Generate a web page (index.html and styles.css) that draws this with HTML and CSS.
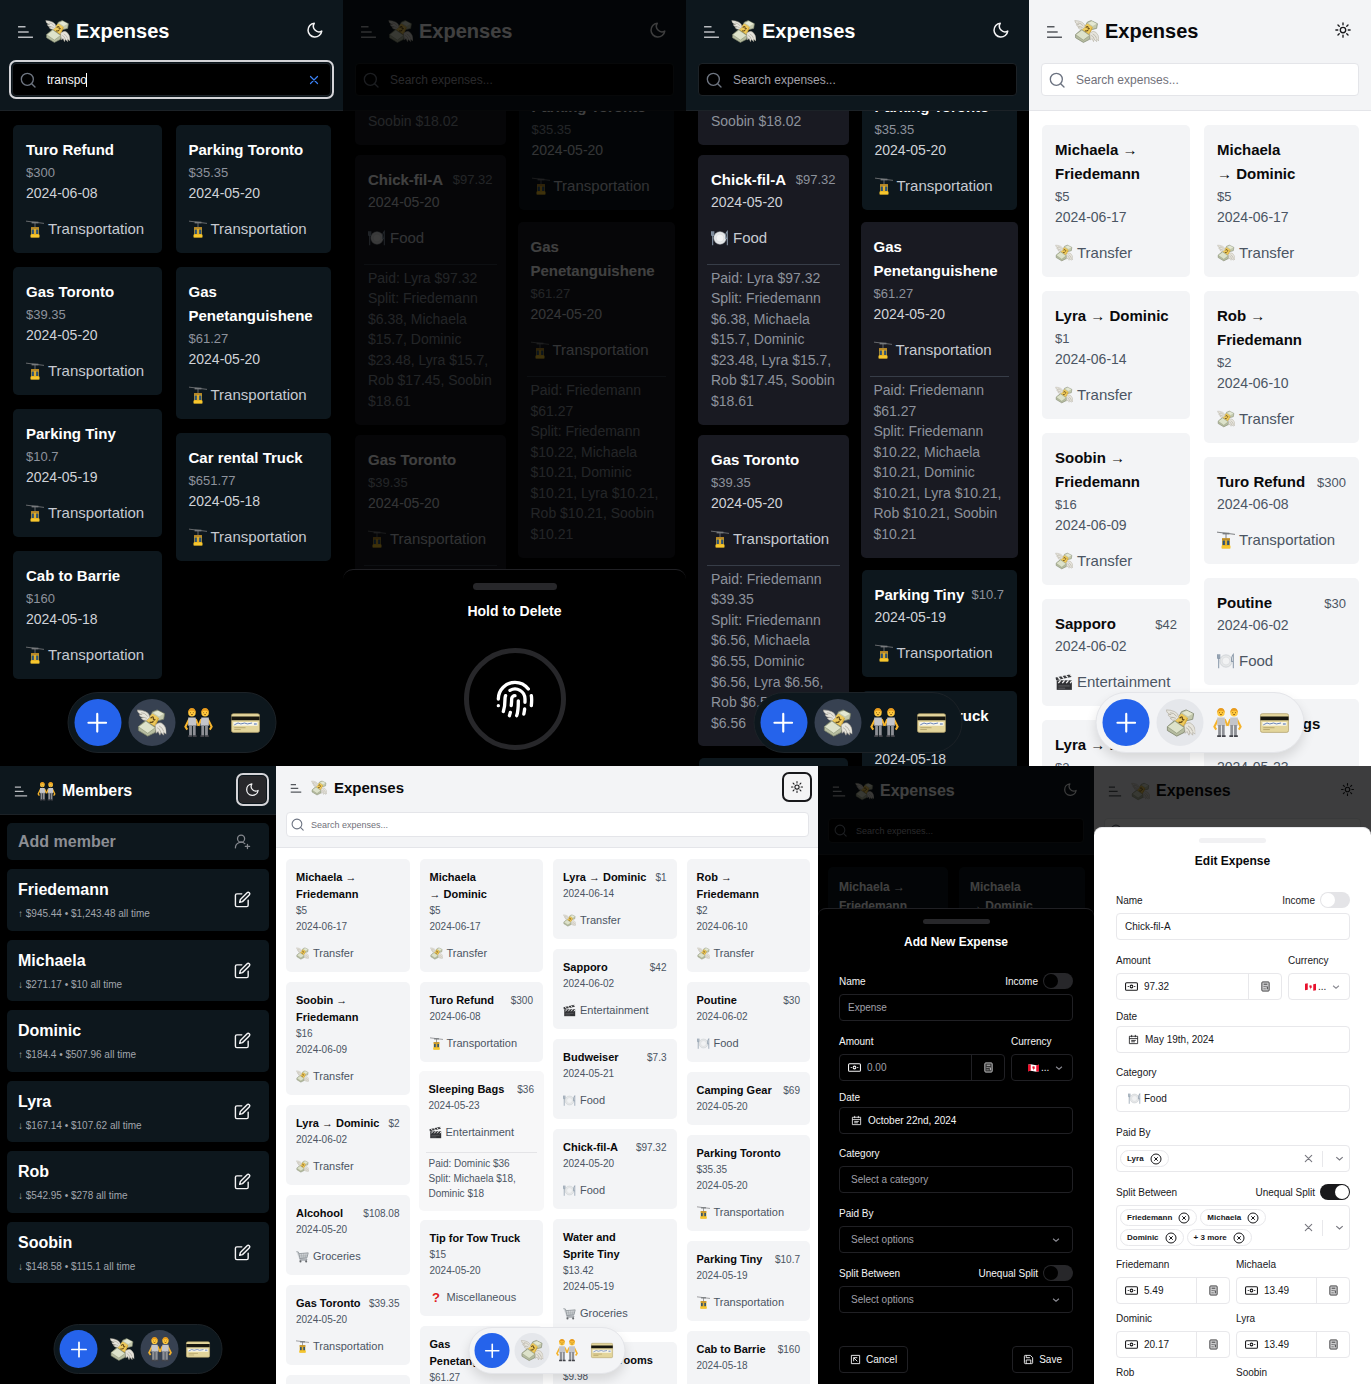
FILE: index.html
```html
<!DOCTYPE html>
<html lang="en">
<head>
<meta charset="utf-8">
<meta name="viewport" content="width=device-width, initial-scale=1">
<title>Expenses</title>
<link rel="stylesheet" href="styles.css">
</head>
<body>
<svg class="sprite" aria-hidden="true">
  <symbol id="menu" viewBox="0 0 16 16"><path d="M1 3.500h7M1 8.500h10M1 13.500h14" fill="none" stroke="currentColor" stroke-width="1.400"/></symbol>
  <symbol id="moon" viewBox="0 0 24 24"><path d="M11 3a7.500 7.500 0 0 0 10 10.500A9.200 9.200 0 1 1 11 3Z" fill="none" stroke="currentColor" stroke-width="2" stroke-linejoin="round"/></symbol>
  <symbol id="sun" viewBox="0 0 24 24"><g fill="none" stroke="currentColor" stroke-width="1.800" stroke-linecap="round"><circle cx="12" cy="12" r="3.600"/><path d="M12 2.500v2.500M12 19v2.500M2.500 12H5M19 12h2.500M5.300 5.300 7 7M17 17l1.700 1.700M5.300 18.700 7 17M17 7l1.700-1.700"/></g></symbol>
  <symbol id="search" viewBox="0 0 24 24"><g fill="none" stroke="currentColor" stroke-width="2" stroke-linecap="round"><circle cx="11" cy="11" r="9"/><path d="m17.500 17.500 5 5"/></g></symbol>
  <symbol id="plus" viewBox="0 0 24 24"><path d="M12 3v18M3 12h18" stroke="currentColor" stroke-width="2.200" stroke-linecap="round"/></symbol>
  <symbol id="x" viewBox="0 0 24 24"><path d="m5 5 14 14M19 5 5 19" stroke="currentColor" stroke-width="2.400" stroke-linecap="round"/></symbol>
  <symbol id="chevron" viewBox="0 0 24 24"><path d="m5 9 7 6 7-6" fill="none" stroke="currentColor" stroke-width="2.600"/></symbol>
  <symbol id="x-circle" viewBox="0 0 24 24"><g fill="none" stroke="currentColor" stroke-width="2"><circle cx="12" cy="12" r="10"/><path d="m8.500 8.500 7 7M15.500 8.500l-7 7"/></g></symbol>
  <symbol id="edit" viewBox="0 0 24 24"><g fill="none" stroke="currentColor" stroke-width="2" stroke-linecap="round" stroke-linejoin="round"><path d="M11 4H4a2 2 0 0 0-2 2v14a2 2 0 0 0 2 2h14a2 2 0 0 0 2-2v-7"/><path d="M18.500 2.500a2.121 2.121 0 0 1 3 3L12 15l-4 1 1-4 9.500-9.500z"/></g></symbol>
  <symbol id="user-plus" viewBox="0 0 24 24"><g fill="none" stroke="currentColor" stroke-width="1.800" stroke-linecap="round"><path d="M2 21a8 8 0 0 1 13.292-6"/><circle cx="10" cy="8" r="5"/><path d="M19 16v6M22 19h-6"/></g></symbol>
  <symbol id="fingerprint" viewBox="0 0 24 24"><path fill="none" stroke="currentColor" stroke-width="2" stroke-linecap="round" d="M2 12C2 6.500 6.500 2 12 2a10 10 0 0 1 8 4M5 19.500C5.500 18 6 15 6 12c0-.7.12-1.370.34-2M17.290 21.020c.12-.6.43-2.300.5-3.020M12 10a2 2 0 0 0-2 2c0 1.020-.1 2.510-.26 4M8.650 22c.21-.66.45-1.320.57-2M14 13.120c0 2.380 0 6.380-1 8.880M2 16h.01M21.800 16c.2-2 .131-5.354 0-6M9 6.800a6 6 0 0 1 9 5.200c0 .47 0 1.170-.02 2"/></symbol>
  <symbol id="note" viewBox="0 0 24 24"><g fill="none" stroke="currentColor" stroke-width="2"><rect x="1" y="5" width="22" height="14" rx="2"/><circle cx="12" cy="12" r="2.500"/><path d="M5 12h2M17 12h2"/></g></symbol>
  <symbol id="calc" viewBox="0 0 24 24"><rect x="4" y="2" width="16" height="20" rx="2" fill="currentColor" fill-opacity=".25" stroke="currentColor" stroke-width="2"/><path d="M8 7h8M8 12h2M12 12h2M8 17h2M12 17h1M16 12v6" stroke="currentColor" stroke-width="2"/></symbol>
  <symbol id="calendar" viewBox="0 0 24 24"><path d="M3 5h18v16H3zM3 10h18M8 2v5M16 2v5M7 14h10M7 17h8" fill="none" stroke="currentColor" stroke-width="1.800"/></symbol>
  <symbol id="leave" viewBox="0 0 24 24"><path d="M3 3h18v18H3zM8 16V8h8M8 8l8 8" fill="none" stroke="currentColor" stroke-width="2"/></symbol>
  <symbol id="save" viewBox="0 0 24 24"><path d="M3 5q0-2 2-2h11l5 5v11q0 2-2 2H5q-2 0-2-2zM7 3v5h8M7 21v-8h10v8" fill="none" stroke="currentColor" stroke-width="2"/></symbol>

  <symbol id="money" viewBox="0 0 32 32">
    <path d="m17 4 5-2 8 4-1 6-8 2-7-4z" fill="#c4c9ad" stroke="#777e66" stroke-width=".8"/><path d="m18 5 5-2 6 3-5 3z" fill="#e4e8d2"/>
    <path d="m2 20 8-7 11 8-1 5-8 4-10-6z" fill="#b6bca0" stroke="#777e66" stroke-width=".8"/><path d="m2 20 8-6 10 7-8 6z" fill="#dde2ca" stroke="#848c70" stroke-width=".6"/>
    <path d="m10 13 7-7 7 5-4 9z" fill="#d6a936"/><path d="m10 13 7-7 6 4-4 9z" fill="#edc95b"/><path d="M15 11q3-3 3 0t2 1M14 15q3 1 4-1" fill="none" stroke="#654b18" stroke-width="1.400"/>
    <path d="M1 2q5 0 9 2 4 2 4 6l-3 3Q7 14 5 11l3-1Q3 10 3 7h3Q1 6 1 2z" fill="#e6e4dc" stroke="#a8a294" stroke-width=".6"/>
    <path d="M20 18q5-4 8-1 4 3 4 11l-3-2v3l-3-3-1 3-2-4-2 2z" fill="#e6e4dc" stroke="#a8a294" stroke-width=".6"/>
    <path d="M5 5q4 0 7 4M8 10l3 1M24 19q4 2 5 6M22 21q3 1 4 5" fill="none" stroke="#aaa599" stroke-width=".8"/>
  </symbol>
  <symbol id="pair" viewBox="0 0 32 32">
    <g id="pair-one"><path d="m6 12-4 8 2 3M13 12l3 7" fill="none" stroke="#f5b32c" stroke-width="2.200"/><path d="M5 10h8l1 9H5z" fill="#c4c5ca"/><path d="M6 18h3v12H6zM10 18h3v12h-3z" fill="#8e9096"/><path d="M5 29h4v2H5zM10 29h4v2h-4z" fill="#424349"/><circle cx="9" cy="5" r="4" fill="#ffc93e"/><path d="M5 5Q5 0 9 0t4 5l-2-2H7z" fill="#e89a1c"/><path d="M7 5h1M10 5h1M8 7h2" stroke="#70430d" stroke-width=".8"/></g>
    <use href="#pair-one" transform="translate(32 0) scale(-1 1)"/>
  </symbol>
  <symbol id="card" viewBox="0 0 32 32"><rect x="1" y="6" width="30" height="20" rx="2" fill="#e3d59b" stroke="#a99863" stroke-width=".7"/><path d="M1 9h30v4H1z" fill="#17160f"/><path d="M3 15h26v4H3z" fill="#f8f6ea"/><path d="m4 18 4-2 3 1 4-1 3 1 5-1" fill="none" stroke="#617eb7"/><path d="M25 16h3v2h-3z" fill="#9badcd"/><path d="M4 21h12M4 23h7" stroke="#b6a56c"/></symbol>
  <symbol id="tram" viewBox="0 0 32 32"><path d="m0 2 32 4M16 5v9" fill="none" stroke="#6f7275" stroke-width="1.600"/><path d="M10 3h12v3H10z" fill="#777a7d"/><path d="M9 13h14v18H9z" fill="#e7af1f"/><path d="M9 13h14v3H9z" fill="#b9892a"/><path d="M10 17h4v8h-4zM18 17h4v8h-4z" fill="#2c5276"/><path d="M15 16h2v10h-2z" fill="#d8aa32"/><path d="M8 26h16v5H8z" fill="#f6c72e"/></symbol>
  <symbol id="plate" viewBox="0 0 32 32"><circle cx="16" cy="16" r="11" fill="#e5e7e8" stroke="#bfc4c9"/><circle cx="16" cy="16" r="7" fill="#f1f2f3" stroke="#d2d5d8"/><path d="M1 4v6q0 2 2 2t2-2V4M3 4v25M29 29V4q-4 4-3 13h3" fill="none" stroke="#8998a9" stroke-width="1.800"/></symbol>
  <symbol id="clap" viewBox="0 0 32 32"><path d="M3 13h27v17H3z" fill="#313235"/><path d="m1 8 27-6 1 5-27 6z" fill="#393a3d"/><path d="m5 7 4 4M12 5l4 5M19 4l4 4M26 2l3 3M6 18l4-5M13 18l4-5M20 18l4-5M27 18l3-4" stroke="#f0f0f0" stroke-width="2.400"/><path d="M6 23h20M6 27h12" stroke="#85868a"/></symbol>
  <symbol id="cart" viewBox="0 0 32 32"><path d="m1 4 5 1 4 17h17l-1 3H9M7 9l23-2-3 12-18 2" fill="#d7dadd" stroke="#8c9298" stroke-width="2"/><path d="M8 13h21M9 17h19M13 9l2 12M19 8v12M25 8l-2 11" stroke="#8c9298"/><circle cx="11" cy="28" r="2.500" fill="#63666a"/><circle cx="25" cy="28" r="2.500" fill="#63666a"/></symbol>
  <symbol id="flag" viewBox="0 0 24 16"><path d="M0 1q6-2 12 0t12 0v14q-6 2-12 0t-12 0z" fill="#fff"/><path d="M0 1q3-1 6-1v14q-3 0-6 1zM18 2q3 0 6-1v14q-3 1-6 1z" fill="#e8112d"/><path d="m12 3 1 2 2-1-1 3 2 1-3 2v3h-1v-3L9 8l1-1-1-3 2 1z" fill="#e8112d"/></symbol>
</svg>

<main class="board">
<div class="row row-top">

  <section class="screen phone dark">
    <header class="top">
      <div class="brand"><button class="menu" aria-label="Menu"><svg><use href="#menu"/></svg></button><svg class="logo"><use href="#money"/></svg><h2>Expenses</h2><button class="mode" aria-label="Theme"><svg><use href="#moon"/></svg></button></div>
      <div class="search focused"><svg><use href="#search"/></svg><input type="text" aria-label="Search expenses" value="transpo"><span class="caret"></span><button class="clear" aria-label="Clear"><svg><use href="#x"/></svg></button></div>
    </header>
    <div class="feed">
      <div class="col">
        <article class="card"><div class="head"><h3>Turo Refund</h3><span>$300</span></div><time>2024-06-08</time><p class="cat"><svg><use href="#tram"/></svg>Transportation</p></article>
        <article class="card"><div class="head"><h3>Gas Toronto</h3><span>$39.35</span></div><time>2024-05-20</time><p class="cat"><svg><use href="#tram"/></svg>Transportation</p></article>
        <article class="card"><div class="head"><h3>Parking Tiny</h3><span>$10.7</span></div><time>2024-05-19</time><p class="cat"><svg><use href="#tram"/></svg>Transportation</p></article>
        <article class="card"><div class="head"><h3>Cab to Barrie</h3><span>$160</span></div><time>2024-05-18</time><p class="cat"><svg><use href="#tram"/></svg>Transportation</p></article>
      </div>
      <div class="col">
        <article class="card"><div class="head"><h3>Parking Toronto</h3><span>$35.35</span></div><time>2024-05-20</time><p class="cat"><svg><use href="#tram"/></svg>Transportation</p></article>
        <article class="card"><div class="head"><h3>Gas<br>Penetanguishene</h3><span>$61.27</span></div><time>2024-05-20</time><p class="cat"><svg><use href="#tram"/></svg>Transportation</p></article>
        <article class="card"><div class="head"><h3>Car rental Truck</h3><span>$651.77</span></div><time>2024-05-18</time><p class="cat"><svg><use href="#tram"/></svg>Transportation</p></article>
      </div>
    </div>
    <nav class="dock"><button class="add" aria-label="Add"><svg><use href="#plus"/></svg></button><a href="#" class="on" aria-label="Expenses"><svg><use href="#money"/></svg></a><a href="#" aria-label="Members"><svg><use href="#pair"/></svg></a><a href="#" aria-label="Balances"><svg><use href="#card"/></svg></a></nav>
  </section>

  <section class="screen phone dark">
    <header class="top">
      <div class="brand"><button class="menu" aria-label="Menu"><svg><use href="#menu"/></svg></button><svg class="logo"><use href="#money"/></svg><h2>Expenses</h2><button class="mode" aria-label="Theme"><svg><use href="#moon"/></svg></button></div>
      <div class="search"><svg><use href="#search"/></svg><input type="text" aria-label="Search expenses" placeholder="Search expenses..."></div>
    </header>
    <div class="feed scrolled">
      <div class="col">
        <article class="card open"><p class="rest">Soobin $18.02</p></article>
        <article class="card open"><div class="head inline"><h3>Chick-fil-A</h3><span>$97.32</span></div><time>2024-05-20</time><p class="cat"><svg><use href="#plate"/></svg>Food</p><p class="split">Paid: Lyra $97.32<br>Split: Friedemann<br>$6.38, Michaela<br>$15.7, Dominic<br>$23.48, Lyra $15.7,<br>Rob $17.45, Soobin<br>$18.61</p></article>
        <article class="card open"><div class="head"><h3>Gas Toronto</h3><span>$39.35</span></div><time>2024-05-20</time><p class="cat"><svg><use href="#tram"/></svg>Transportation</p><p class="split">Paid: Friedemann<br>$39.35<br>Split: Friedemann</p></article>
      </div>
      <div class="col">
        <article class="card"><div class="head"><h3>Parking Toronto</h3><span>$35.35</span></div><time>2024-05-20</time><p class="cat"><svg><use href="#tram"/></svg>Transportation</p></article>
        <article class="card open"><div class="head"><h3>Gas<br>Penetanguishene</h3><span>$61.27</span></div><time>2024-05-20</time><p class="cat"><svg><use href="#tram"/></svg>Transportation</p><p class="split">Paid: Friedemann<br>$61.27<br>Split: Friedemann<br>$10.22, Michaela<br>$10.21, Dominic<br>$10.21, Lyra $10.21,<br>Rob $10.21, Soobin<br>$10.21</p></article>
      </div>
    </div>
    <div class="shade"></div>
    <div class="sheet confirm" role="dialog" aria-label="Hold to Delete">
      <div class="grip"></div><h2>Hold to Delete</h2>
      <button class="hold" aria-label="Hold to delete"><svg><use href="#fingerprint"/></svg></button>
    </div>
  </section>

  <section class="screen phone dark">
    <header class="top">
      <div class="brand"><button class="menu" aria-label="Menu"><svg><use href="#menu"/></svg></button><svg class="logo"><use href="#money"/></svg><h2>Expenses</h2><button class="mode" aria-label="Theme"><svg><use href="#moon"/></svg></button></div>
      <div class="search"><svg><use href="#search"/></svg><input type="text" aria-label="Search expenses" placeholder="Search expenses..."></div>
    </header>
    <div class="feed scrolled">
      <div class="col">
        <article class="card open"><p class="rest">Soobin $18.02</p></article>
        <article class="card open"><div class="head inline"><h3>Chick-fil-A</h3><span>$97.32</span></div><time>2024-05-20</time><p class="cat"><svg><use href="#plate"/></svg>Food</p><p class="split">Paid: Lyra $97.32<br>Split: Friedemann<br>$6.38, Michaela<br>$15.7, Dominic<br>$23.48, Lyra $15.7,<br>Rob $17.45, Soobin<br>$18.61</p></article>
        <article class="card open"><div class="head"><h3>Gas Toronto</h3><span>$39.35</span></div><time>2024-05-20</time><p class="cat"><svg><use href="#tram"/></svg>Transportation</p><p class="split">Paid: Friedemann<br>$39.35<br>Split: Friedemann<br>$6.56, Michaela<br>$6.55, Dominic<br>$6.56, Lyra $6.56,<br>Rob $6.56, Soobin<br>$6.56</p></article>
        <article class="card"><div class="head"></div></article>
      </div>
      <div class="col">
        <article class="card"><div class="head"><h3>Parking Toronto</h3><span>$35.35</span></div><time>2024-05-20</time><p class="cat"><svg><use href="#tram"/></svg>Transportation</p></article>
        <article class="card open"><div class="head"><h3>Gas<br>Penetanguishene</h3><span>$61.27</span></div><time>2024-05-20</time><p class="cat"><svg><use href="#tram"/></svg>Transportation</p><p class="split">Paid: Friedemann<br>$61.27<br>Split: Friedemann<br>$10.22, Michaela<br>$10.21, Dominic<br>$10.21, Lyra $10.21,<br>Rob $10.21, Soobin<br>$10.21</p></article>
        <article class="card"><div class="head inline"><h3>Parking Tiny</h3><span>$10.7</span></div><time>2024-05-19</time><p class="cat"><svg><use href="#tram"/></svg>Transportation</p></article>
        <article class="card"><div class="head"><h3>Car rental Truck</h3><span>$651.77</span></div><time>2024-05-18</time></article>
      </div>
    </div>
    <nav class="dock"><button class="add" aria-label="Add"><svg><use href="#plus"/></svg></button><a href="#" class="on" aria-label="Expenses"><svg><use href="#money"/></svg></a><a href="#" aria-label="Members"><svg><use href="#pair"/></svg></a><a href="#" aria-label="Balances"><svg><use href="#card"/></svg></a></nav>
  </section>

  <section class="screen phone light">
    <header class="top">
      <div class="brand"><button class="menu" aria-label="Menu"><svg><use href="#menu"/></svg></button><svg class="logo"><use href="#money"/></svg><h2>Expenses</h2><button class="mode" aria-label="Theme"><svg><use href="#sun"/></svg></button></div>
      <div class="search"><svg><use href="#search"/></svg><input type="text" aria-label="Search expenses" placeholder="Search expenses..."></div>
    </header>
    <div class="feed">
      <div class="col">
        <article class="card"><div class="head"><h3>Michaela <i>→</i><br>Friedemann</h3><span>$5</span></div><time>2024-06-17</time><p class="cat"><svg><use href="#money"/></svg>Transfer</p></article>
        <article class="card"><div class="head"><h3>Lyra <i>→</i> Dominic</h3><span>$1</span></div><time>2024-06-14</time><p class="cat"><svg><use href="#money"/></svg>Transfer</p></article>
        <article class="card"><div class="head"><h3>Soobin <i>→</i><br>Friedemann</h3><span>$16</span></div><time>2024-06-09</time><p class="cat"><svg><use href="#money"/></svg>Transfer</p></article>
        <article class="card"><div class="head inline"><h3>Sapporo</h3><span>$42</span></div><time>2024-06-02</time><p class="cat"><svg><use href="#clap"/></svg>Entertainment</p></article>
        <article class="card"><div class="head"><h3>Lyra <i>→</i> Dominic</h3><span>$2</span></div></article>
      </div>
      <div class="col">
        <article class="card"><div class="head"><h3>Michaela<br><i>→</i> Dominic</h3><span>$5</span></div><time>2024-06-17</time><p class="cat"><svg><use href="#money"/></svg>Transfer</p></article>
        <article class="card"><div class="head"><h3>Rob <i>→</i><br>Friedemann</h3><span>$2</span></div><time>2024-06-10</time><p class="cat"><svg><use href="#money"/></svg>Transfer</p></article>
        <article class="card"><div class="head inline"><h3>Turo Refund</h3><span>$300</span></div><time>2024-06-08</time><p class="cat"><svg><use href="#tram"/></svg>Transportation</p></article>
        <article class="card"><div class="head inline"><h3>Poutine</h3><span>$30</span></div><time>2024-06-02</time><p class="cat"><svg><use href="#plate"/></svg>Food</p></article>
        <article class="card"><div class="head"><h3>Sleeping Bags</h3><span>$36</span></div><time>2024-05-23</time></article>
      </div>
    </div>
    <nav class="dock"><button class="add" aria-label="Add"><svg><use href="#plus"/></svg></button><a href="#" class="on" aria-label="Expenses"><svg><use href="#money"/></svg></a><a href="#" aria-label="Members"><svg><use href="#pair"/></svg></a><a href="#" aria-label="Balances"><svg><use href="#card"/></svg></a></nav>
  </section>
</div>

<div class="row row-bottom">
  <section class="screen small dark">
    <header class="top bare">
      <div class="brand"><button class="menu" aria-label="Menu"><svg><use href="#menu"/></svg></button><svg class="logo"><use href="#pair"/></svg><h2>Members</h2><button class="mode ring" aria-label="Theme"><svg><use href="#moon"/></svg></button></div>
    </header>
    <div class="members">
      <div class="add-member"><input type="text" aria-label="Add member" placeholder="Add member"><button aria-label="Add member"><svg><use href="#user-plus"/></svg></button></div>
      <article class="member"><div><h3>Friedemann</h3><p>↑ $945.44 • $1,243.48 all time</p></div><button aria-label="Edit Friedemann"><svg><use href="#edit"/></svg></button></article>
      <article class="member"><div><h3>Michaela</h3><p>↓ $271.17 • $10 all time</p></div><button aria-label="Edit Michaela"><svg><use href="#edit"/></svg></button></article>
      <article class="member"><div><h3>Dominic</h3><p>↑ $184.4 • $507.96 all time</p></div><button aria-label="Edit Dominic"><svg><use href="#edit"/></svg></button></article>
      <article class="member"><div><h3>Lyra</h3><p>↓ $167.14 • $107.62 all time</p></div><button aria-label="Edit Lyra"><svg><use href="#edit"/></svg></button></article>
      <article class="member"><div><h3>Rob</h3><p>↓ $542.95 • $278 all time</p></div><button aria-label="Edit Rob"><svg><use href="#edit"/></svg></button></article>
      <article class="member"><div><h3>Soobin</h3><p>↓ $148.58 • $115.1 all time</p></div><button aria-label="Edit Soobin"><svg><use href="#edit"/></svg></button></article>
    </div>
    <nav class="dock"><button class="add" aria-label="Add"><svg><use href="#plus"/></svg></button><a href="#" aria-label="Expenses"><svg><use href="#money"/></svg></a><a href="#" class="on" aria-label="Members"><svg><use href="#pair"/></svg></a><a href="#" aria-label="Balances"><svg><use href="#card"/></svg></a></nav>
  </section>

  <section class="screen wide light">
    <header class="top">
      <div class="brand"><button class="menu" aria-label="Menu"><svg><use href="#menu"/></svg></button><svg class="logo"><use href="#money"/></svg><h2>Expenses</h2><button class="mode ring" aria-label="Theme"><svg><use href="#sun"/></svg></button></div>
      <div class="search"><svg><use href="#search"/></svg><input type="text" aria-label="Search expenses" placeholder="Search expenses..."></div>
    </header>
    <div class="feed">
      <div class="col">
        <article class="card"><div class="head"><h3>Michaela <i>→</i><br>Friedemann</h3><span>$5</span></div><time>2024-06-17</time><p class="cat"><svg><use href="#money"/></svg>Transfer</p></article>
        <article class="card"><div class="head"><h3>Soobin <i>→</i><br>Friedemann</h3><span>$16</span></div><time>2024-06-09</time><p class="cat"><svg><use href="#money"/></svg>Transfer</p></article>
        <article class="card"><div class="head inline"><h3>Lyra <i>→</i> Dominic</h3><span>$2</span></div><time>2024-06-02</time><p class="cat"><svg><use href="#money"/></svg>Transfer</p></article>
        <article class="card"><div class="head inline"><h3>Alcohool</h3><span>$108.08</span></div><time>2024-05-20</time><p class="cat"><svg><use href="#cart"/></svg>Groceries</p></article>
        <article class="card"><div class="head inline"><h3>Gas Toronto</h3><span>$39.35</span></div><time>2024-05-20</time><p class="cat"><svg><use href="#tram"/></svg>Transportation</p></article>
        <article class="card"><div class="head"></div></article>
      </div>
      <div class="col">
        <article class="card"><div class="head"><h3>Michaela<br><i>→</i> Dominic</h3><span>$5</span></div><time>2024-06-17</time><p class="cat"><svg><use href="#money"/></svg>Transfer</p></article>
        <article class="card"><div class="head inline"><h3>Turo Refund</h3><span>$300</span></div><time>2024-06-08</time><p class="cat"><svg><use href="#tram"/></svg>Transportation</p></article>
        <article class="card open"><div class="head inline"><h3>Sleeping Bags</h3><span>$36</span></div><time>2024-05-23</time><p class="cat"><svg><use href="#clap"/></svg>Entertainment</p><p class="split">Paid: Dominic $36<br>Split: Michaela $18,<br>Dominic $18</p></article>
        <article class="card"><div class="head"><h3>Tip for Tow Truck</h3><span>$15</span></div><time>2024-05-20</time><p class="cat"><b>?</b>Miscellaneous</p></article>
        <article class="card"><div class="head"><h3>Gas<br>Penetanguishene</h3><span>$61.27</span></div></article>
      </div>
      <div class="col">
        <article class="card"><div class="head inline"><h3>Lyra <i>→</i> Dominic</h3><span>$1</span></div><time>2024-06-14</time><p class="cat"><svg><use href="#money"/></svg>Transfer</p></article>
        <article class="card"><div class="head inline"><h3>Sapporo</h3><span>$42</span></div><time>2024-06-02</time><p class="cat"><svg><use href="#clap"/></svg>Entertainment</p></article>
        <article class="card"><div class="head inline"><h3>Budweiser</h3><span>$7.3</span></div><time>2024-05-21</time><p class="cat"><svg><use href="#plate"/></svg>Food</p></article>
        <article class="card"><div class="head inline"><h3>Chick-fil-A</h3><span>$97.32</span></div><time>2024-05-20</time><p class="cat"><svg><use href="#plate"/></svg>Food</p></article>
        <article class="card"><div class="head"><h3>Water and<br>Sprite Tiny</h3><span>$13.42</span></div><time>2024-05-19</time><p class="cat"><svg><use href="#cart"/></svg>Groceries</p></article>
        <article class="card"><div class="head"><h3>King Mushrooms</h3><span>$9.98</span></div></article>
      </div>
      <div class="col">
        <article class="card"><div class="head"><h3>Rob <i>→</i><br>Friedemann</h3><span>$2</span></div><time>2024-06-10</time><p class="cat"><svg><use href="#money"/></svg>Transfer</p></article>
        <article class="card"><div class="head inline"><h3>Poutine</h3><span>$30</span></div><time>2024-06-02</time><p class="cat"><svg><use href="#plate"/></svg>Food</p></article>
        <article class="card"><div class="head inline"><h3>Camping Gear</h3><span>$69</span></div><time>2024-05-20</time></article>
        <article class="card"><div class="head"><h3>Parking Toronto</h3><span>$35.35</span></div><time>2024-05-20</time><p class="cat"><svg><use href="#tram"/></svg>Transportation</p></article>
        <article class="card"><div class="head inline"><h3>Parking Tiny</h3><span>$10.7</span></div><time>2024-05-19</time><p class="cat"><svg><use href="#tram"/></svg>Transportation</p></article>
        <article class="card"><div class="head inline"><h3>Cab to Barrie</h3><span>$160</span></div><time>2024-05-18</time><p class="cat"></p></article>
      </div>
    </div>
    <nav class="dock"><button class="add" aria-label="Add"><svg><use href="#plus"/></svg></button><a href="#" class="on" aria-label="Expenses"><svg><use href="#money"/></svg></a><a href="#" aria-label="Members"><svg><use href="#pair"/></svg></a><a href="#" aria-label="Balances"><svg><use href="#card"/></svg></a></nav>
  </section>

  <section class="screen small dark">
    <header class="top">
      <div class="brand"><button class="menu" aria-label="Menu"><svg><use href="#menu"/></svg></button><svg class="logo"><use href="#money"/></svg><h2>Expenses</h2><button class="mode" aria-label="Theme"><svg><use href="#moon"/></svg></button></div>
      <div class="search"><svg><use href="#search"/></svg><input type="text" aria-label="Search expenses" placeholder="Search expenses..."></div>
    </header>
    <div class="feed">
      <div class="col"><article class="card"><div class="head"><h3>Michaela <i>→</i><br>Friedemann</h3></div></article></div>
      <div class="col"><article class="card"><div class="head"><h3>Michaela<br><i>→</i> Dominic</h3></div></article></div>
    </div>
    <div class="shade"></div>
    <form class="sheet add-sheet">
      <div class="grip"></div><h2>Add New Expense</h2>
      <div class="fields">
        <div class="field"><div class="labels"><label for="a-name">Name</label><label class="toggle">Income<input type="checkbox"></label></div><input class="box" id="a-name" type="text" placeholder="Expense"></div>
        <div class="money-row">
          <div class="field"><div class="labels"><label for="a-amount">Amount</label></div><div class="box amount"><svg><use href="#note"/></svg><input id="a-amount" type="text" placeholder="0.00"><button type="button" aria-label="Calculator"><svg><use href="#calc"/></svg></button></div></div>
          <div class="field"><div class="labels"><label for="a-cur">Currency</label></div><div class="box currency"><svg class="flag"><use href="#flag"/></svg><select id="a-cur"><option>...</option></select><svg class="chev"><use href="#chevron"/></svg></div></div>
        </div>
        <div class="field tight"><div class="labels"><label for="a-date">Date</label></div><button type="button" class="box date" id="a-date"><svg><use href="#calendar"/></svg>October 22nd, 2024</button></div>
        <div class="field"><div class="labels"><label for="a-cat">Category</label></div><div class="box pick"><select id="a-cat"><option>Select a category</option></select></div></div>
        <div class="field"><div class="labels"><label for="a-paid">Paid By</label></div><div class="box pick"><select id="a-paid"><option>Select options</option></select><svg class="chev"><use href="#chevron"/></svg></div></div>
        <div class="field"><div class="labels"><label for="a-split">Split Between</label><label class="toggle">Unequal Split<input type="checkbox"></label></div><div class="box pick"><select id="a-split"><option>Select options</option></select><svg class="chev"><use href="#chevron"/></svg></div></div>
        <div class="actions"><button type="button" class="box"><svg><use href="#leave"/></svg>Cancel</button><button type="button" class="box"><svg><use href="#save"/></svg>Save</button></div>
      </div>
    </form>
  </section>

  <section class="screen small light">
    <header class="top">
      <div class="brand"><button class="menu" aria-label="Menu"><svg><use href="#menu"/></svg></button><svg class="logo"><use href="#money"/></svg><h2>Expenses</h2><button class="mode" aria-label="Theme"><svg><use href="#sun"/></svg></button></div>
      <div class="search"><svg><use href="#search"/></svg><input type="text" aria-label="Search expenses" placeholder="Search expenses..."></div>
    </header>
    <div class="shade"></div>
    <form class="sheet edit-sheet">
      <div class="grip"></div><h2>Edit Expense</h2>
      <div class="fields">
        <div class="field"><div class="labels"><label for="e-name">Name</label><label class="toggle">Income<input type="checkbox"></label></div><input class="box" id="e-name" type="text" value="Chick-fil-A"></div>
        <div class="money-row">
          <div class="field"><div class="labels"><label for="e-amount">Amount</label></div><div class="box amount"><svg><use href="#note"/></svg><input id="e-amount" type="text" value="97.32"><button type="button" aria-label="Calculator"><svg><use href="#calc"/></svg></button></div></div>
          <div class="field"><div class="labels"><label for="e-cur">Currency</label></div><div class="box currency"><svg class="flag"><use href="#flag"/></svg><select id="e-cur"><option>...</option></select><svg class="chev"><use href="#chevron"/></svg></div></div>
        </div>
        <div class="field tight"><div class="labels"><label for="e-date">Date</label></div><button type="button" class="box date" id="e-date"><svg><use href="#calendar"/></svg>May 19th, 2024</button></div>
        <div class="field"><div class="labels"><label for="e-cat">Category</label></div><div class="box pick"><svg class="emoji"><use href="#plate"/></svg><select id="e-cat"><option>Food</option></select></div></div>
        <div class="field"><div class="labels"><span>Paid By</span></div><div class="box multi"><div class="chips"><button type="button">Lyra<svg><use href="#x-circle"/></svg></button></div><button type="button" class="ctl" aria-label="Clear"><svg><use href="#x"/></svg></button><button type="button" class="ctl last" aria-label="Open"><svg><use href="#chevron"/></svg></button></div></div>
        <div class="field"><div class="labels"><span>Split Between</span><label class="toggle">Unequal Split<input type="checkbox" checked></label></div><div class="box multi"><div class="chips"><button type="button">Friedemann<svg><use href="#x-circle"/></svg></button><button type="button">Michaela<svg><use href="#x-circle"/></svg></button><button type="button">Dominic<svg><use href="#x-circle"/></svg></button><button type="button">+ 3 more<svg><use href="#x-circle"/></svg></button></div><button type="button" class="ctl" aria-label="Clear"><svg><use href="#x"/></svg></button><button type="button" class="ctl last" aria-label="Open"><svg><use href="#chevron"/></svg></button></div></div>
        <div class="shares">
          <div class="field"><div class="labels"><label for="s-1">Friedemann</label></div><div class="box amount"><svg><use href="#note"/></svg><input id="s-1" type="text" value="5.49"><button type="button" aria-label="Calculator"><svg><use href="#calc"/></svg></button></div></div>
          <div class="field"><div class="labels"><label for="s-2">Michaela</label></div><div class="box amount"><svg><use href="#note"/></svg><input id="s-2" type="text" value="13.49"><button type="button" aria-label="Calculator"><svg><use href="#calc"/></svg></button></div></div>
          <div class="field"><div class="labels"><label for="s-3">Dominic</label></div><div class="box amount"><svg><use href="#note"/></svg><input id="s-3" type="text" value="20.17"><button type="button" aria-label="Calculator"><svg><use href="#calc"/></svg></button></div></div>
          <div class="field"><div class="labels"><label for="s-4">Lyra</label></div><div class="box amount"><svg><use href="#note"/></svg><input id="s-4" type="text" value="13.49"><button type="button" aria-label="Calculator"><svg><use href="#calc"/></svg></button></div></div>
          <div class="field"><div class="labels"><span>Rob</span></div></div>
          <div class="field"><div class="labels"><span>Soobin</span></div></div>
        </div>
      </div>
    </form>
  </section>
</div>
</main>
</body>
</html>
```

FILE: styles.css
```css
* { box-sizing: border-box; margin: 0; padding: 0; }
body { font-family: "Liberation Sans", Arial, sans-serif; background: #000; }
button, input, select { font: inherit; color: inherit; background: none; border: 0; outline: 0; }
button { display: inline-flex; align-items: center; justify-content: center; cursor: pointer; }
select { appearance: none; }
svg { display: block; flex: none; }
.sprite { position: absolute; width: 0; height: 0; }

.board { height: 100vh; display: grid; grid-template-rows: minmax(0, 766fr) minmax(0, 618fr); overflow: hidden; }
.row { display: grid; }
.row-top { grid-template-columns: minmax(0, 343fr) minmax(0, 343fr) minmax(0, 343fr) minmax(0, 342fr); }
.row-bottom { grid-template-columns: minmax(0, 276fr) minmax(0, 542fr) minmax(0, 276fr) minmax(0, 277fr); }

/* themes */
.dark {
  --bg: #000; --panel: #0d171d; --open: #191a22; --line: #1c2227; --rule: #373d48; --title: #fff; --price: #8d929c;
  --date: #d0d3d8; --cat: #c6cad1; --icon: #b9bcc0; --field: #000; --hint: #a1a1aa; --glass: #6f7682;
  --on: #374151; --ring: #d4d4d8; --ring-bg: #27272a; --grip: #27272a; --edge: #202024; --text: #f4f4f5;
  --track: #27272a; --knob: #000; --nav-shadow: none;
}
.light {
  --bg: #fff; --panel: #f3f4f6; --open: #f7f7f8; --line: #e4e5e9; --rule: #e4e4e7; --title: #09090b; --price: #4b5563;
  --date: #4b5563; --cat: #4b5563; --icon: #55585e; --field: #fff; --hint: #71717a; --glass: #6b7280;
  --on: #e5e7eb; --ring: #18181b; --ring-bg: #f4f4f5; --grip: #f1f1f3; --edge: #e8e8eb; --text: #18181b;
  --track: #e4e4e7; --knob: #fff; --nav-shadow: 0 6px 12px rgb(0 0 0 / .12);
}

/* size scales */
.phone {
  --pad: 12px; --top: 15px; --rowh: 32px; --gap: 16px; --sh: 33px; --bot: 14px; --menu: 17px; --inset: 5px; --mgap: 11px; --logo: 25px; --lgap: 6px;
  --h: 20px; --mode: 33px; --modei: 18px; --st: 12px; --si: 16px; --sp: 7px; --sg: 11px;
  --cols: 149fr 156fr; --fg: 14px; --ft: 14px; --fl: 13px; --fr: 12px; --cp: 13px; --t: 15px; --tl: 24px; --p: 13px; --d: 14px; --dl: 21px; --cm: 14px; --c: 15px; --cl: 22px; --e: 18px; --grow: 2px; --sm: 15px; --btn: 47px; --ng: 7px; --ne: 30px; --nb: 13px;
}
.small {
  --pad: 10px; --top: 12px; --rowh: 26px; --gap: 14px; --sh: 25px; --bot: 11px; --menu: 14px; --inset: 4px; --mgap: 9px; --logo: 19px; --lgap: 6px;
  --h: 16px; --mode: 27px; --modei: 15px; --st: 9px; --si: 13px; --sp: 5px; --sg: 9px;
  --cols: 120fr 126fr; --fg: 11px; --ft: 12px; --fl: 10px; --fr: 9px; --cp: 11px; --t: 12px; --tl: 19px; --p: 10px; --d: 11px; --dl: 16px; --cm: 11px; --c: 12px; --cl: 18px; --e: 14px; --grow: 1px; --sm: 11px; --btn: 38px; --ng: 5px; --ne: 25px; --nb: 10px;
}
.wide {
  --pad: 10px; --top: 9px; --rowh: 26px; --gap: 11px; --sh: 25px; --bot: 10px; --menu: 12px; --inset: 4px; --mgap: 9px; --logo: 16px; --lgap: 7px;
  --h: 15px; --mode: 24px; --modei: 14px; --st: 9px; --si: 13px; --sp: 4px; --sg: 7px;
  --cols: 1fr 1fr 1fr 1fr; --fg: 10px; --ft: 11px; --fl: 10px; --fr: 8px; --cp: 10px; --t: 11px; --tl: 17px; --p: 10px; --d: 10px; --dl: 16px; --cm: 10px; --c: 11px; --cl: 17px; --e: 13px; --grow: 1px; --sm: 11px; --btn: 35px; --ng: 5px; --ne: 23px; --nb: 10px;
}

.screen { position: relative; overflow: hidden; display: flex; flex-direction: column; background: var(--bg); color: var(--text); }

.top { position: relative; z-index: 1; flex: none; display: flex; flex-direction: column; gap: var(--gap); padding: var(--top) var(--pad) var(--bot); background: var(--panel); border-bottom: 1px solid var(--line); }
.wide .top { padding-right: 9px; }
.top.bare { padding-bottom: 10px; }
.brand { display: flex; align-items: center; height: var(--rowh); padding-left: var(--inset); }
.menu { color: var(--icon); margin-right: var(--mgap); }
.menu svg { width: var(--menu); height: var(--menu); }
.logo { width: var(--logo); height: var(--logo); margin-right: var(--lgap); }
.brand h2 { font-size: var(--h); line-height: var(--rowh); color: var(--title); }
.mode { margin: 0 0 3px auto; width: var(--mode); height: var(--mode); color: var(--text); border-radius: 4px; }
.mode svg { width: var(--modei); height: var(--modei); }
.mode.ring { background: var(--ring-bg); outline: 2px solid var(--ring); outline-offset: 1px; }

.search { position: relative; display: flex; align-items: center; gap: var(--sg); height: var(--sh); padding: 0 var(--sp); background: var(--field); border: 1px solid var(--line); border-radius: 4px; font-size: var(--st); }
.search > svg { width: var(--si); height: var(--si); color: var(--glass); }
.search input { flex: 1; min-width: 0; }
.search ::placeholder, .box::placeholder, .box ::placeholder { color: var(--hint); opacity: 1; }
.search.focused { outline: 2px solid var(--ring); outline-offset: 1px; }
.caret { position: absolute; left: 73px; width: 1px; height: 14px; background: #fff; }
.clear { color: #3b82f6; width: 18px; }
.clear svg { width: 12px; height: 12px; }

.feed { flex: 1; min-height: 0; display: grid; grid-template-columns: var(--cols); gap: var(--fg); padding: var(--ft) var(--fr) 0 var(--fl); }
.col { min-width: 0; display: flex; flex-direction: column; gap: var(--fg); }
.feed.scrolled { padding-top: 0; }
.scrolled .col:first-child { margin-top: -11px; }
.scrolled .col:last-child { margin-top: -29px; }
.card { flex: none; background: var(--panel); border-radius: 5px; padding: var(--cp); white-space: nowrap; }
.card h3 { font-size: var(--t); line-height: var(--tl); color: var(--title); }
.card h3 i { font-style: normal; font-weight: 400; }
.head { min-height: var(--tl); }
.head span { display: block; font-size: var(--p); line-height: var(--dl); color: var(--price); }
.head.inline { display: flex; justify-content: space-between; align-items: center; }
.card time { display: block; font-size: var(--d); line-height: var(--dl); color: var(--date); }
.cat { display: flex; align-items: center; gap: 4px; margin-top: var(--cm); font-size: var(--c); line-height: var(--cl); color: var(--cat); }
.cat svg { width: var(--e); height: var(--e); }
.cat b { width: var(--e); font-size: 13px; text-align: center; color: #e02020; }
.card.open { background: var(--open); margin: calc(var(--grow) * -1) -1px; }
.rest, .split { font-size: var(--d); line-height: 1.47; color: var(--price); }
.split { margin: var(--sm) -4px 0; padding: 3px 4px 0; border-top: 1px solid var(--rule); }
.wide .split { line-height: 15px; padding: 3px 3px 0; margin-left: -3px; margin-right: -3px; }

.dock { position: absolute; z-index: 2; bottom: var(--nb); left: 50%; transform: translateX(-50%); display: flex; padding: 6px; background: var(--panel); border: 1px solid var(--line); border-radius: 40px; box-shadow: var(--nav-shadow); }
.small .dock, .wide .dock { padding: 5px; }
.dock a, .add { width: var(--btn); height: var(--btn); border-radius: 50%; display: flex; align-items: center; justify-content: center; }
.dock a svg { width: var(--ne); height: var(--ne); }
.dock .on { background: var(--on); }
.add { background: #2563eb; color: #fff; margin-right: var(--ng); }
.add svg { width: 50%; height: 50%; }

/* members */
.members { display: flex; flex-direction: column; gap: 9px; padding: 8px 7px; }
.add-member, .member { display: flex; align-items: center; justify-content: space-between; background: var(--panel); border-radius: 5px; padding: 0 18px 0 11px; }
.add-member { height: 37px; color: #85888e; }
.add-member input { flex: 1; min-width: 0; font-size: 16px; font-weight: 700; }
.add-member ::placeholder { color: #8b8e94; opacity: 1; }
.member { padding-top: 9px; padding-bottom: 9px; }
.member h3 { font-size: 16px; line-height: 24px; color: #fff; }
.member p { margin-top: 4px; font-size: 10px; line-height: 1.55; color: #a1a5ac; }
.members svg { width: 17px; height: 17px; }

/* sheets */
.shade { position: absolute; z-index: 2; inset: 0; background: rgb(0 0 0 / .75); }
.sheet { position: absolute; z-index: 3; left: 0; right: 0; bottom: 0; display: flex; flex-direction: column; align-items: center; background: var(--bg); border-top: 1px solid var(--edge); border-radius: 8px 8px 0 0; padding-top: 10px; }
.grip { width: 67px; height: 5px; border-radius: 4px; background: var(--grip); }
.sheet h2 { margin-top: 9px; font-size: 12px; line-height: 18px; color: var(--title); }
.confirm { padding: 13px 0 16px; border-radius: 10px 10px 0 0; }
.confirm .grip { width: 84px; height: 7px; }
.confirm h2 { margin-top: 10px; font-size: 14px; line-height: 22px; }
.hold { margin-top: 26px; width: 102px; height: 102px; border: 5px solid #27272a; border-radius: 50%; color: #fff; }
.hold svg { width: 40px; height: 40px; }
.add-sheet { top: 23%; }
.edit-sheet { top: 61px; }

.fields { align-self: stretch; display: flex; flex-direction: column; gap: 12px; padding: 22px 21px 0; font-size: 10px; }
.light .fields { padding-left: 22px; }
.field { display: flex; flex-direction: column; gap: 5px; min-width: 0; }
.field.tight { margin-top: -4px; margin-bottom: -1px; gap: 2px; }
.labels { display: flex; justify-content: space-between; align-items: center; height: 16px; white-space: nowrap; }
.toggle { display: flex; align-items: center; gap: 5px; }
.toggle input { appearance: none; width: 30px; height: 16px; border-radius: 8px; background: var(--track); padding: 1px; }
.toggle input::before { content: ""; display: block; width: 14px; height: 14px; border-radius: 50%; background: var(--knob); }
.toggle input:checked { background: #18181b; }
.toggle input:checked::before { margin-left: auto; }
.box { display: flex; align-items: center; width: 100%; height: 27px; border: 1px solid var(--edge); border-radius: 4px; background: var(--field); padding: 0 8px; }
.money-row { display: grid; grid-template-columns: minmax(0, 1fr) 62px; gap: 6px; }
.amount { padding: 0 0 0 8px; gap: 6px; }
.amount > svg { width: 13px; height: 13px; }
.amount input { flex: 1; width: 0; min-width: 0; }
.amount button { width: 33px; height: 100%; border-left: 1px solid var(--edge); }
.amount button svg { width: 11px; height: 11px; opacity: .85; }
.currency { justify-content: flex-end; gap: 2px; }
.flag { width: 11px; height: 8px; }
.currency select { width: 11px; }
.chev { width: 10px; height: 10px; color: #8b8b93; }
.date { justify-content: flex-start; gap: 6px; padding-left: 11px; }
.date svg, .actions svg { width: 11px; height: 11px; }
.pick { padding: 0 11px; gap: 3px; }
.pick select { flex: 1; min-width: 0; }
.dark .pick { color: var(--hint); }
.emoji { width: 13px; height: 13px; }
.actions { display: flex; justify-content: space-between; margin-top: 21px; }
.actions .box { width: auto; gap: 5px; padding: 0 10px; }
.multi { height: auto; min-height: 27px; padding: 3px 0 3px 3px; }
.chips { flex: 1; display: flex; flex-wrap: wrap; gap: 3px; }
.chips button { height: 17px; gap: 6px; padding: 0 6px; border: 1px solid var(--edge); border-radius: 9px; font-size: 8px; font-weight: 700; white-space: nowrap; }
.chips svg { width: 12px; height: 12px; }
.ctl { width: 28px; height: 16px; color: #77777f; }
.ctl svg { width: 11px; height: 11px; }
.ctl.last { width: 27px; padding-left: 6px; border-left: 1px solid var(--edge); }
.shares { display: grid; grid-template-columns: 1fr 1fr; gap: 6px; margin-top: -6px; }
```
